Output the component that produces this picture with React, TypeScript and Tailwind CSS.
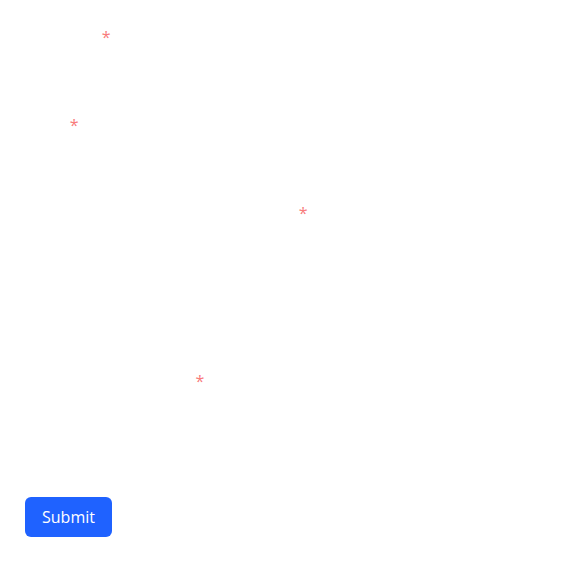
import { useState } from "react";

const FONT = { fontFamily: '"Open Sans", "Noto Sans", sans-serif' };

function Label({ htmlFor, text }: { htmlFor: string; text: string }) {
  return (
    <label htmlFor={htmlFor} className="block text-base leading-6 text-white">
      {text}
      <span className="ml-1 text-[#f87b7b]">*</span>
    </label>
  );
}

export default function App() {
  const [form, setForm] = useState({ name: "", email: "", language: "", bio: "" });

  const handleChange = (
    e: React.ChangeEvent<HTMLInputElement | HTMLTextAreaElement>,
  ) => {
    setForm({ ...form, [e.target.name]: e.target.value });
  };

  return (
    <div className="min-h-[562px] bg-white" style={FONT}>
      <form
        onSubmit={(e) => e.preventDefault()}
        className="flex flex-col px-[25px] pt-[25px]"
      >
        <div className="flex flex-col gap-2 pb-4">
          <Label htmlFor="name" text="Full name" />
          <input
            id="name"
            name="name"
            value={form.name}
            onChange={handleChange}
            className="h-10 rounded-md border border-white bg-white px-3 outline-none"
          />
        </div>
        <div className="flex flex-col gap-2 pb-4">
          <Label htmlFor="email" text="Email" />
          <input
            id="email"
            name="email"
            value={form.email}
            onChange={handleChange}
            className="h-10 rounded-md border border-white bg-white px-3 outline-none"
          />
        </div>
        <div className="flex flex-col gap-2 pb-4">
          <Label htmlFor="language" text="My favorite programming languages" />
          <textarea
            id="language"
            name="language"
            value={form.language}
            onChange={handleChange}
            className="h-[120px] resize-none rounded-md border border-white bg-white px-3 outline-none"
          />
        </div>
        <div className="flex flex-col gap-2 pb-4">
          <Label htmlFor="bio" text="Tell us about yourself?" />
          <textarea
            id="bio"
            name="bio"
            value={form.bio}
            onChange={handleChange}
            className="h-[80px] resize-none rounded-md border border-white bg-white px-3 outline-none"
          />
        </div>
        <div>
          <button
            type="submit"
            className="h-10 rounded-md bg-[#1f62ff] px-[17px] text-base font-medium text-white"
          >
            Submit
          </button>
        </div>
      </form>
    </div>
  );
}
